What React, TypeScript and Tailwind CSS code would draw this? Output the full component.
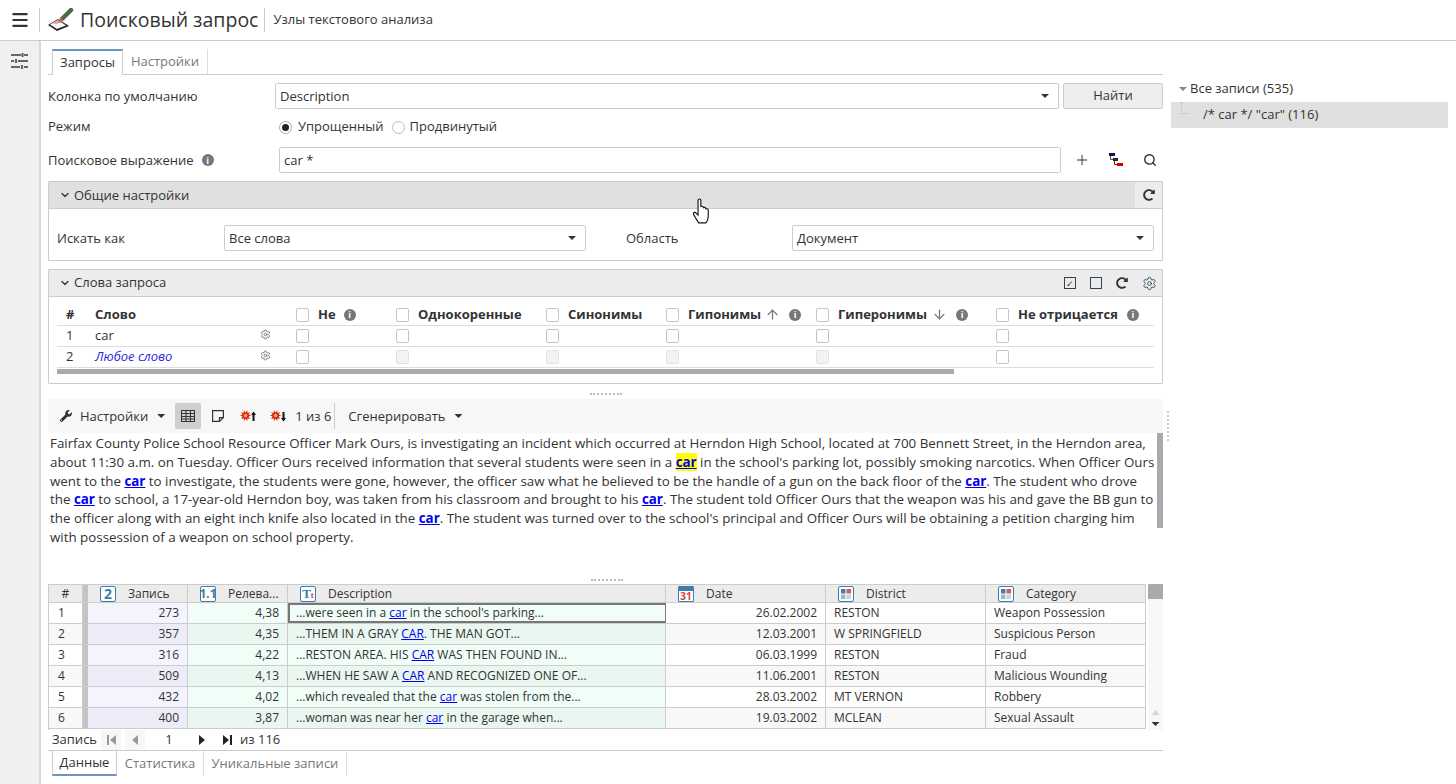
import { ChevronDown, Menu, Plus, Search, Settings, ArrowUp, ArrowDown } from "lucide-react";
import { FaRedoAlt, FaWrench } from "react-icons/fa";

const font = { fontFamily: '"Open Sans", "Noto Sans", sans-serif' };

function Caret({ color = "bg-[#333]" }: { color?: string }) {
  return (
    <span
      className={`inline-block w-[8px] h-[4px] ${color}`}
      style={{ clipPath: "polygon(0 0,100% 0,50% 100%)" }}
    />
  );
}

function Info({ className = "" }: { className?: string }) {
  return (
    <span className={`inline-flex w-[12px] h-[12px] rounded-full bg-[#777] text-white text-[9px] font-bold items-center justify-center leading-none ${className}`}>
      i
    </span>
  );
}

function Check({ disabled }: { disabled?: boolean }) {
  return (
    <span
      className={`inline-block shrink-0 w-[13px] h-[14px] rounded-[2px] border ${
        disabled ? "bg-[#f3f3f3] border-[#e2e2e2]" : "bg-white border-[#c4c4c4]"
      }`}
    />
  );
}

function Select({ value, className }: { value: string; className: string }) {
  return (
    <div className={`h-[26px] flex items-center justify-between border border-[#ccc] rounded-[2px] bg-white pl-[4px] pr-[9px] ${className}`}>
      <span className="pt-px">{value}</span>
      <Caret />
    </div>
  );
}

function TypeIcon({ children }: { children: React.ReactNode }) {
  return (
    <span className="inline-flex w-[16px] h-[16px] shrink-0 items-center justify-center border border-[#3d7fa8] rounded-[2px] bg-white text-[#3d7fa8] font-bold leading-none">
      {children}
    </span>
  );
}

function CategoryIcon() {
  return (
    <TypeIcon>
      <svg width="10" height="10" viewBox="0 0 10 10">
        <rect x="0" y="0" width="4.5" height="4.5" fill="#3d7fa8" />
        <rect x="5.5" y="0" width="4.5" height="4.5" fill="#e0584c" />
        <rect x="0" y="5.5" width="4.5" height="4.5" fill="#9ab8cf" />
        <rect x="5.5" y="5.5" width="4.5" height="4.5" fill="#c3d3e0" />
      </svg>
    </TypeIcon>
  );
}

function CalendarIcon() {
  return (
    <span className="w-[16px] h-[16px] shrink-0 flex flex-col border border-[#3d7fa8] rounded-[1px] bg-white overflow-hidden">
      <span className="h-[4px] shrink-0 bg-[#3d7fa8]" />
      <span className="flex-1 flex items-center justify-center text-[#d9453a] text-[10px] font-bold leading-none">31</span>
    </span>
  );
}

const starPoints = Array.from({ length: 20 }, (_, i) => {
  const r = i % 2 === 0 ? 5.6 : 3.2;
  const a = (i * Math.PI) / 10;
  return `${5.6 + r * Math.cos(a)},${5.6 + r * Math.sin(a)}`;
}).join(" ");

function Burst({ down }: { down?: boolean }) {
  return (
    <svg width="16" height="12" viewBox="0 0 16 12">
      <polygon points={starPoints} fill="#d8261a" />
      <circle cx="5.6" cy="5.6" r="1.8" fill="#f4a92c" />
      {down ? (
        <path d="M12.5 2h2v6h1.500l-2.500 3.500L11 8h1.500z" fill="#111" />
      ) : (
        <path d="M13.500 1.500L16 5h-1.500v6h-2V5H11z" fill="#111" />
      )}
    </svg>
  );
}

function Hl({ children }: { children: React.ReactNode }) {
  return <b className="font-bold text-[#0000ee] underline">{children}</b>;
}

function Cu({ children }: { children: React.ReactNode }) {
  return <span className="text-[#0000ee] underline">{children}</span>;
}

const words = [
  { id: 1, word: "car", any: false },
  { id: 2, word: "Любое слово", any: true },
];

const rows = [
  { n: 1, rec: 273, rel: "4,38", desc: <>...were seen in a <Cu>car</Cu> in the school's parking...</>, date: "26.02.2002", district: "RESTON", cat: "Weapon Possession" },
  { n: 2, rec: 357, rel: "4,35", desc: <>...THEM IN A GRAY <Cu>CAR</Cu>. THE MAN GOT...</>, date: "12.03.2001", district: "W SPRINGFIELD", cat: "Suspicious Person" },
  { n: 3, rec: 316, rel: "4,22", desc: <>...RESTON AREA. HIS <Cu>CAR</Cu> WAS THEN FOUND IN...</>, date: "06.03.1999", district: "RESTON", cat: "Fraud" },
  { n: 4, rec: 509, rel: "4,13", desc: <>...WHEN HE SAW A <Cu>CAR</Cu> AND RECOGNIZED ONE OF...</>, date: "11.06.2001", district: "RESTON", cat: "Malicious Wounding" },
  { n: 5, rec: 432, rel: "4,02", desc: <>...which revealed that the <Cu>car</Cu> was stolen from the...</>, date: "28.03.2002", district: "MT VERNON", cat: "Robbery" },
  { n: 6, rec: 400, rel: "3,87", desc: <>...woman was near her <Cu>car</Cu> in the garage when...</>, date: "19.03.2002", district: "MCLEAN", cat: "Sexual Assault" },
];

const wordCols = [
  { left: "w-[100px]", label: "Не", extra: <Info className="ml-[8px]" /> },
  { left: "w-[150px]", label: "Однокоренные" },
  { left: "w-[120px]", label: "Синонимы" },
  { left: "w-[150px]", label: "Гипонимы", extra: <><ArrowUp size={15} className="ml-[4px] text-[#777]" /><Info className="ml-[9px]" /></> },
  { left: "w-[180px]", label: "Гиперонимы", extra: <><ArrowDown size={15} className="ml-[5px] text-[#777]" /><Info className="ml-[9px]" /></> },
  { left: "w-[158px]", label: "Не отрицается", extra: <Info className="ml-[9px]" /> },
];

export default function App() {
  return (
    <div className="w-[1456px] h-[784px] overflow-hidden bg-white text-[13px] text-[#333] flex flex-col" style={font}>
      {/* шапка */}
      <header className="h-[41px] shrink-0 flex items-center border-b border-[#ccc]">
        <div className="w-[39px] flex justify-center">
          <Menu size={20} strokeWidth={2.6} className="text-[#333]" />
        </div>
        <div className="w-px h-[24px] bg-[#ccc]" />
        <svg width="26" height="24" viewBox="0 0 26 24" className="ml-[8px]">
          <path d="M0 17l10-6 11 7-12 5z" fill="#222" />
          <path d="M2 16.500l8-4.500 8 5.500-9 3.500z" fill="#f7f7f7" />
          <path d="M5 15l6-3.500 3 2-6 3z" fill="#e6a8a0" />
          <path d="M14 11l9-9" stroke="#4c6a4c" strokeWidth="4.500" strokeLinecap="round" />
          <path d="M14 11l-3 3" stroke="#c46a60" strokeWidth="3" />
        </svg>
        <span className="ml-[6px] text-[19.5px] leading-none">Поисковый запрос</span>
        <div className="w-px h-[24px] bg-[#ccc] ml-[6px]" />
        <span className="ml-[8px] text-[13px]">Узлы текстового анализа</span>
      </header>

      <div className="flex flex-1 min-h-0">
        {/* боковая панель */}
        <aside className="w-[41px] shrink-0 bg-[#f0f0f0] border-r-2 border-[#d8d8d8] flex justify-center pt-[12px]">
          <svg width="17" height="16" viewBox="0 0 17 16" fill="none" stroke="#666">
            <path d="M0 2h10M13 2h4M11.500 0v4" strokeWidth="2.200" />
            <path d="M0 8h3M7 8h10M5 6v4" strokeWidth="2.200" />
            <path d="M0 14h9M13 14h4M11 12v4" strokeWidth="2.200" />
          </svg>
        </aside>

        <main className="w-[1115px] ml-[7px] shrink-0 flex flex-col relative">
          {/* вкладки */}
          <div className="h-[34px] pt-[8px] flex items-end border-b border-[#ccc] shrink-0">
            <div className="ml-[4px] h-[26px] w-[71px] flex items-center justify-center bg-white border-x border-[#ccc] border-t-2 border-t-[#6b96c4] -mb-px">Запросы</div>
            <div className="h-[25px] w-[85px] flex items-center justify-center pt-px text-[#777] border-r border-[#ddd]">Настройки</div>
          </div>

          {/* форма */}
          <div className="flex items-center mt-[8px] h-[26px]">
            <span className="w-[227px] pt-px">Колонка по умолчанию</span>
            <Select value="Description" className="w-[784px]" />
            <button className="ml-[4px] w-[100px] h-[26px] bg-[#eee] border border-[#ccc] rounded-[2px] text-center">Найти</button>
          </div>
          <div className="flex items-center mt-[5px] h-[26px]">
            <span className="w-[231px]">Режим</span>
            <span className="w-[13px] h-[13px] rounded-full border border-[#aaa] flex items-center justify-center">
              <span className="w-[7px] h-[7px] rounded-full bg-[#222]" />
            </span>
            <span className="ml-[6px]">Упрощенный</span>
            <span className="ml-[8px] w-[13px] h-[13px] rounded-full border border-[#bbb]" />
            <span className="ml-[5px]">Продвинутый</span>
          </div>
          <div className="flex items-center mt-[7px] h-[26px]">
            <span className="w-[231px] flex items-center gap-[8px]"><span className="pt-px">Поисковое выражение</span> <Info /></span>
            <div className="w-[782px] h-[26px] flex items-center border border-[#ccc] rounded-[2px] pl-[4px] pt-px">car *</div>
            <Plus size={16} strokeWidth={1.5} className="ml-[13px] text-[#333]" />
            <svg width="14" height="14" viewBox="0 0 14 14" className="ml-[19px]">
              <path d="M1.500 3v3.500H4" fill="none" stroke="#7a4a10" strokeWidth="1" />
              <path d="M5.500 8v3.500H8" fill="none" stroke="#d40000" strokeWidth="1" />
              <rect x="0" y="0" width="6" height="3" fill="#101060" />
              <rect x="4" y="5" width="5" height="3" fill="#103060" />
              <rect x="8" y="10" width="6" height="3" fill="#d40000" />
            </svg>
            <Search size={14} strokeWidth={2.4} className="ml-[20px] text-[#333]" />
          </div>

          {/* Общие настройки */}
          <section className="mt-[8px] h-[80px] shrink-0 border border-[#ccc] rounded-[1px]">
            <div className="h-[27px] flex items-center bg-[#e0e0e0] border-b border-[#ccc]">
              <ChevronDown size={12} strokeWidth={2.5} className="ml-[10px]" />
              <span className="ml-[3px] pt-px">Общие настройки</span>
              <div className="ml-auto w-[27px] h-full bg-[#ececec] flex items-center justify-center">
                <FaRedoAlt size={12} />
              </div>
            </div>
            <div className="flex items-center mt-[16px] pl-[8px]">
              <span className="w-[167px] pt-px">Искать как</span>
              <Select value="Все слова" className="w-[362px]" />
              <span className="ml-[40px] w-[166px] pt-px">Область</span>
              <Select value="Документ" className="w-[362px]" />
            </div>
          </section>

          {/* Слова запроса */}
          <section className="mt-[8px] h-[115px] shrink-0 border border-[#ccc] rounded-[1px]">
            <div className="h-[27px] flex items-center bg-[#ececec] border-b border-[#ccc]">
              <ChevronDown size={12} strokeWidth={2.5} className="ml-[10px]" />
              <span className="ml-[3px]">Слова запроса</span>
              <div className="ml-auto flex items-center gap-[14px] pr-[5px] text-[#333]">
                <span className="w-[12px] h-[12px] border-[1.5px] border-[#2c4454] flex items-center justify-center text-[9px] leading-none">✓</span>
                <span className="w-[12px] h-[12px] border-[1.5px] border-[#2c4454]" />
                <FaRedoAlt size={12} />
                <Settings size={15} strokeWidth={1.4} className="text-[#2c4454]" />
              </div>
            </div>
            <div className="ml-[8px] w-[1097px]">
              <div className="h-[22px] mt-[7px] flex items-center font-bold border-b border-[#ddd]">
                <span className="w-[38px] pl-[9px]">#</span>
                <span className="w-[201px]">Слово</span>
                {wordCols.map((c) => (
                  <span key={c.label} className={`${c.left} flex items-center`}>
                    <Check />
                    <span className="ml-[9px]">{c.label}</span>
                    {c.extra}
                  </span>
                ))}
              </div>
              {words.map((w) => (
                <div key={w.id} className="h-[21px] flex items-center border-b border-[#ddd]">
                  <span className="w-[38px] pl-[9px]">{w.id}</span>
                  <span className={`w-[201px] relative ${w.any ? "italic text-[#2a2ae0]" : ""}`}>
                    {w.word}
                    <Settings size={11} className="absolute left-[165px] top-[3px] not-italic text-[#777]" />
                  </span>
                  {wordCols.map((c, i) => (
                    <span key={c.label} className={`${c.left} flex items-center`}>
                      <Check disabled={w.any && i > 0 && i < 5} />
                    </span>
                  ))}
                </div>
              ))}
              <div className="h-[5px] w-[897px] mt-[1px] bg-[#a9a9ae]" />
            </div>
          </section>

          {/* разделитель */}
          <div className="h-[15px] shrink-0 flex items-center justify-center pt-[4px]">
            <span className="w-[32px] border-t-2 border-dotted border-[#bbb]" />
          </div>

          {/* панель инструментов */}
          <div className="h-[34px] shrink-0 bg-[#f7f7f7] flex items-center pl-[12px]">
            <FaWrench size={12} />
            <span className="ml-[8px] pt-px">Настройки</span>
            <span className="ml-[9px] flex"><Caret /></span>
            <span className="ml-[10px] w-[26px] h-[26px] rounded-[2px] bg-[#cfcfcf] flex items-center justify-center">
              <svg width="14" height="12" viewBox="0 0 14 12" fill="none" stroke="#333" strokeWidth="1">
                <rect x="0.500" y="0.500" width="13" height="11" />
                <path d="M0 3.500h14M0 6.500h14M0 9h14M5 0v12M9.500 0v12" />
              </svg>
            </span>
            <svg width="12" height="12" viewBox="0 0 12 12" fill="none" stroke="#333" strokeWidth="1.200" className="ml-[11px]">
              <path d="M7.500 11.400H.600V.600h10.800v7L7.500 11.400V7.600h3.900" />
            </svg>
            <span className="ml-[16px] flex"><Burst /></span>
            <span className="ml-[14px] flex"><Burst down /></span>
            <span className="ml-[9px] pt-px">1 из 6</span>
            <span className="w-px h-[26px] bg-[#ccc] ml-[3px]" />
            <span className="ml-[13px] pt-px">Сгенерировать</span>
            <span className="ml-[9px] flex"><Caret /></span>
          </div>

          {/* текст записи */}
          <div className="h-[146px] shrink-0 relative pl-[2px] pt-[1px] text-[13.35px] leading-[18.800px] whitespace-nowrap">
            <div>Fairfax County Police School Resource Officer Mark Ours, is investigating an incident which occurred at Herndon High School, located at 700 Bennett Street, in the Herndon area,</div>
            <div>about 11:30 a.m. on Tuesday. Officer Ours received information that several students were seen in a <b className="font-bold text-[#0000ee] underline bg-[#ffff00]">car</b> in the school's parking lot, possibly smoking narcotics. When Officer Ours</div>
            <div>went to the <Hl>car</Hl> to investigate, the students were gone, however, the officer saw what he believed to be the handle of a gun on the back floor of the <Hl>car</Hl>. The student who drove</div>
            <div>the <Hl>car</Hl> to school, a 17-year-old Herndon boy, was taken from his classroom and brought to his <Hl>car</Hl>. The student told Officer Ours that the weapon was his and gave the BB gun to</div>
            <div>the officer along with an eight inch knife also located in the <Hl>car</Hl>. The student was turned over to the school's principal and Officer Ours will be obtaining a petition charging him</div>
            <div>with possession of a weapon on school property.</div>
            <div className="absolute right-0 top-0 w-[6px] h-[95px] bg-[#a9a9ae]" />
            <span className="absolute right-[-6px] top-[-22px] h-[30px] border-l-2 border-dotted border-[#ccc]" />
            <span className="absolute left-[543px] bottom-[-2px] w-[32px] border-t-2 border-dotted border-[#bbb]" />
          </div>

          {/* таблица */}
          <div className="mt-[5px] h-[146px] shrink-0 flex overflow-hidden text-[12px]">
            <div className="w-[1098px] border-l border-[#ccc]">
              <div className="h-[19px] flex bg-[#ececec] border-y border-[#ccc]">
                <span className="w-[34px] text-center border-r border-[#ccc]">#</span>
                <span className="w-[5px] bg-[#c4c4c4]" />
                <span className="w-[100px] flex items-center pl-[12px] gap-[12px] border-r border-[#ccc]"><TypeIcon><span className="text-[14px]">2</span></TypeIcon>Запись</span>
                <span className="w-[100px] flex items-center pl-[12px] gap-[12px] border-r border-[#ccc]"><TypeIcon><span className="text-[12px]">1<span className="text-[#d9453a]">.</span>1</span></TypeIcon>Релева...</span>
                <span className="w-[378px] flex items-center pl-[12px] gap-[12px] border-r border-[#ccc]"><TypeIcon><span className="text-[13px] [font-family:'Liberation_Serif',serif]">T<span className="text-[9px] text-[#d9453a]">t</span></span></TypeIcon>Description</span>
                <span className="w-[160px] flex items-center pl-[12px] gap-[12px] border-r border-[#ccc]"><CalendarIcon />Date</span>
                <span className="w-[160px] flex items-center pl-[12px] gap-[12px] border-r border-[#ccc]"><CategoryIcon />District</span>
                <span className="w-[160px] flex items-center pl-[12px] gap-[12px] border-r border-[#ccc]"><CategoryIcon />Category</span>
              </div>
              {rows.map((r) => {
                const even = r.n % 2 === 0;
                return (
                  <div key={r.n} className="h-[21px] flex border-b border-[#ccc] whitespace-nowrap">
                    <span className={`w-[34px] pl-[9px] flex items-center border-r border-[#ccc] ${even ? "bg-[#f8f8f8]" : "bg-white"}`}>{r.n}</span>
                    <span className="w-[5px] bg-[#c4c4c4]" />
                    <span className={`w-[100px] pr-[8px] flex items-center justify-end border-r border-[#ccc] ${even ? "bg-[#ececf8]" : "bg-[#f4f4fe]"}`}>{r.rec}</span>
                    <span className={`w-[100px] pr-[8px] flex items-center justify-end border-r border-[#ccc] ${even ? "bg-[#e9f7f0]" : "bg-[#f0fef7]"}`}>{r.rel}</span>
                    <span className={`w-[378px] flex items-center border-r ${even ? "bg-[#e9f7f0]" : "bg-[#f0fef7]"} ${r.n === 1 ? "border-[#777] border-2 pl-[6px]" : "border-[#ccc] pl-[8px]"}`}><span>{r.desc}</span></span>
                    <span className={`w-[160px] pr-[8px] flex items-center justify-end border-r border-[#ccc] ${even ? "bg-[#f8f8f8]" : "bg-white"}`}>{r.date}</span>
                    <span className={`w-[160px] pl-[8px] flex items-center border-r border-[#ccc] ${even ? "bg-[#f8f8f8]" : "bg-white"}`}>{r.district}</span>
                    <span className={`w-[160px] pl-[8px] flex items-center border-r border-[#ccc] ${even ? "bg-[#f8f8f8]" : "bg-white"}`}>{r.cat}</span>
                  </div>
                );
              })}
            </div>
            <div className="ml-[2px] w-[15px] bg-[#f7f7f7] flex flex-col items-center">
              <div className="w-full h-[15px] bg-[#a9a9ae]" />
              <div className="mt-auto mb-[4px] flex flex-col gap-[7px] items-center">
                <span className="w-[8px] h-[5px] bg-[#d4d4d4]" style={{ clipPath: "polygon(50% 0,100% 100%,0 100%)" }} />
                <Caret />
              </div>
            </div>
          </div>

          {/* пейджер */}
          <div className="h-[21px] shrink-0 flex items-center pl-[4px] border-b border-[#ccc] text-[13px]">
            <span>Запись</span>
            <span className="ml-[4px] w-[20px] h-[20px] bg-[#f7f7f7] flex items-center justify-center">
              <svg width="9" height="10" viewBox="0 0 9 10"><path d="M0 0h2v10H0zM9 0v10L3 5z" fill="#999" /></svg>
            </span>
            <span className="ml-[4px] w-[20px] h-[20px] bg-[#f7f7f7] flex items-center justify-center">
              <svg width="6" height="10" viewBox="0 0 6 10"><path d="M6 0v10L0 5z" fill="#999" /></svg>
            </span>
            <span className="ml-[14px] w-[20px] text-center">1</span>
            <svg width="6" height="10" viewBox="0 0 6 10" className="ml-[20px]"><path d="M0 0v10l6-5z" fill="#222" /></svg>
            <svg width="9" height="10" viewBox="0 0 9 10" className="ml-[18px]"><path d="M0 0v10l6-5zM7 0h2v10H7z" fill="#222" /></svg>
            <span className="ml-[8px]">из 116</span>
          </div>

          {/* нижние вкладки */}
          <div className="h-[25px] shrink-0 flex items-start">
            <div className="ml-[4px] h-[25px] w-[65px] flex items-center justify-center border-x border-[#ccc] border-b-2 border-b-[#6b96c4]">Данные</div>
            <div className="h-[25px] w-[87px] flex items-center justify-center text-[#777] border-r border-[#ddd]">Статистика</div>
            <div className="h-[25px] w-[143px] flex items-center justify-center text-[#777] border-r border-[#ddd]">Уникальные записи</div>
          </div>

          {/* курсор */}
          <svg width="20" height="26" viewBox="0 0 17 23" className="absolute left-[644px] top-[157px]">
            <path d="M5 2c0-1.500 2.500-1.500 2.500 0v6c0-1 2-1 2.200 0.200V9c.3-1 2-1 2.200.3v.7c.3-.8 2-.7 2.100.6V16c0 3-1.500 5.500-2 6H5.500c-1-2-4-6-4.500-8-.3-1.300 1.500-1.800 2.300-.7L5 15z" fill="#fff" stroke="#111" strokeWidth="1" />
          </svg>
        </main>

        {/* дерево */}
        <aside className="ml-[8px] w-[277px] shrink-0 pt-[36px]">
          <div className="h-[24px] mb-px flex items-center pl-[8px]">
            <Caret color="bg-[#888]" />
            <span className="ml-[3px]">Все записи (535)</span>
          </div>
          <div className="h-[26px] bg-[#e0e0e0] flex items-center pl-[32px] relative">
            <span className="absolute left-[10px] top-0 h-[12px] w-[8px] border-l border-b border-dotted border-[#bbb]" />
            /* car */ "car" (116)
          </div>
        </aside>
      </div>
    </div>
  );
}
